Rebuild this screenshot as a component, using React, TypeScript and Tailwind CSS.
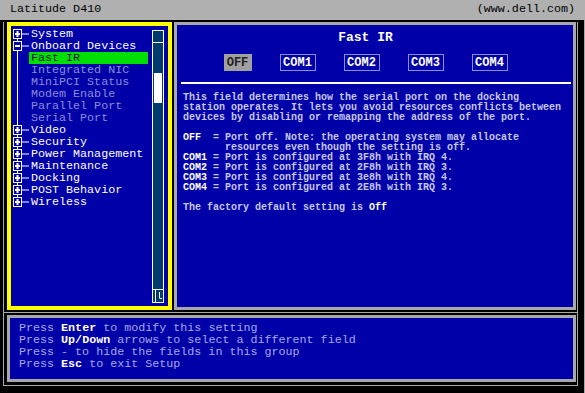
import React from 'react';

type Row = { label: string; kind: 'group' | 'open' | 'item'; selected?: boolean };

const rows: Row[] = [
  { label: 'System', kind: 'group' },
  { label: 'Onboard Devices', kind: 'open' },
  { label: 'Fast IR', kind: 'item', selected: true },
  { label: 'Integrated NIC', kind: 'item' },
  { label: 'MiniPCI Status', kind: 'item' },
  { label: 'Modem Enable', kind: 'item' },
  { label: 'Parallel Port', kind: 'item' },
  { label: 'Serial Port', kind: 'item' },
  { label: 'Video', kind: 'group' },
  { label: 'Security', kind: 'group' },
  { label: 'Power Management', kind: 'group' },
  { label: 'Maintenance', kind: 'group' },
  { label: 'Docking', kind: 'group' },
  { label: 'POST Behavior', kind: 'group' },
  { label: 'Wireless', kind: 'group' },
];

const TreeGlyph = ({ kind, first, last }: { kind: Row['kind']; first: boolean; last: boolean }) => (
  <svg width="18" height="12" viewBox="0 0 18 12" className="shrink-0">
    <line x1="6.5" y1={first ? 6 : 0} x2="6.5" y2={last ? 6 : 12} stroke="#fff" strokeWidth="1" />
    {kind !== 'item' && (
      <>
        <rect x="2.5" y="1.5" width="8" height="9" fill="#0000a8" stroke="#fff" strokeWidth="1" />
        <line x1="4" y1="6" x2="9" y2="6" stroke="#fff" strokeWidth="2" />
        {kind === 'group' && <line x1="6.5" y1="3" x2="6.5" y2="9" stroke="#fff" strokeWidth="2" />}
        <line x1="11" y1="6" x2="18" y2="6" stroke="#fff" strokeWidth="1" />
      </>
    )}
  </svg>
);

const Scrollbar = () => (
  <div className="w-[12px] mt-[4px] mb-[3px] mr-[4px] border border-white bg-[#003c70] flex flex-col">
    <div className="h-[12px] border-b border-white" />
    <div className="flex-1 pt-[30px] px-[1px]">
      <div className="h-[30px] bg-white" />
    </div>
    <div className="h-[13px] border-t border-white flex justify-center">
      <svg width="10" height="12" viewBox="0 0 10 12">
        <line x1="2.5" y1="0" x2="2.5" y2="12" stroke="#fff" />
        <line x1="6.5" y1="2" x2="6.5" y2="8" stroke="#fff" />
        <line x1="6.5" y1="8.5" x2="9" y2="8.5" stroke="#fff" />
      </svg>
    </div>
  </div>
);

const options = ['OFF', 'COM1', 'COM2', 'COM3', 'COM4'];

const K = ({ children }: { children: React.ReactNode }) => <span className="text-white">{children}</span>;

export default function App() {
  return (
    <div className="w-[585px] h-[393px] bg-black flex flex-col font-['Liberation_Mono','DejaVu_Sans_Mono',monospace] overflow-hidden">
      <div className="h-[20px] bg-[#b0b0b0] flex items-center justify-between pl-[10px] pr-[10px] text-[11.7px] text-black shrink-0">
        <span>Latitude D410</span>
        <span>(www.dell.com)</span>
      </div>

      <div className="flex-1 pl-[3px] pr-[2px] pb-[7px] pt-[2px] flex border-r border-[#a8a8a8]">
        <div className="flex-1 mr-[4px] border-l border-r border-b border-[#a8a8a8] pl-[3px] pr-[1px] pb-[3px] flex flex-col">
          <div className="h-[288px] flex gap-[2px]">
            <div className="w-[165px] border-[4px] border-[#ffff00] bg-[#0000a8] flex">
              <div className="flex-1 pt-[2px] text-[11.7px] leading-[12px]">
                {rows.map((r, i) => (
                  <div key={r.label} className="h-[12px] flex items-center">
                    <TreeGlyph kind={r.kind} first={i === 0} last={i === rows.length - 1} />
                    <span
                      className={
                        r.selected
                          ? 'w-[119px] h-[12px] bg-[#00e000] text-[#101040] px-[2px]'
                          : r.kind === 'item'
                          ? 'px-[2px] text-[#8c8cd8]'
                          : 'px-[2px] text-white'
                      }
                    >
                      {r.label}
                    </span>
                  </div>
                ))}
              </div>
              <Scrollbar />
            </div>

            <div className="flex-1 border-[3px] border-[#a8a8a8] bg-[#0000a8] flex flex-col">
              <div className="pr-[19px] flex flex-col items-center">
                <div className="mt-[5px] h-[16px] leading-[16px] text-[13px] font-bold text-white">Fast IR</div>
                <div className="mt-[8px] flex gap-[28px]">
                  {options.map((o) => (
                    <div
                      key={o}
                      className={
                        o === 'OFF'
                          ? 'w-[28px] h-[17px] bg-[#a0a0a0] text-[#202020] text-[12px] font-bold flex items-center justify-center'
                          : 'w-[36px] h-[17px] border border-[#8c8ce0] text-white text-[12px] font-bold flex items-center justify-center'
                      }
                    >
                      {o}
                    </div>
                  ))}
                </div>
              </div>
              <div className="mt-[11px] ml-[4px] mr-[2px] h-[2px] bg-white" />
              <div className="mt-[9px] pl-[6px] text-[10px] leading-[10px] font-bold text-[#c8c8f4] whitespace-pre">
                {'This field determines how the serial port on the docking\n'}
                {'station operates. It lets you avoid resources conflicts between\n'}
                {'devices by disabling or remapping the address of the port.\n'}
                {'\n'}
                <K>OFF</K>{'  = Port off. Note: the operating system may allocate\n'}
                {'       resources even though the setting is off.\n'}
                <K>COM1</K>{' = Port is configured at 3F8h with IRQ 4.\n'}
                <K>COM2</K>{' = Port is configured at 2F8h with IRQ 3.\n'}
                <K>COM3</K>{' = Port is configured at 3e8h with IRQ 4.\n'}
                <K>COM4</K>{' = Port is configured at 2E8h with IRQ 3.\n'}
                {'\n'}
                {'The factory default setting is '}<K>Off</K>
              </div>
            </div>
          </div>

          <div className="mt-[2px] h-px bg-[#a8a8a8] -ml-[3px] -mr-[1px]" />

          <div className="mt-[2px] flex-1 border-[3px] border-[#a8a8a8] bg-[#0000a8] pl-[9px] pt-[4px] text-[11.7px] leading-[12px] text-[#a8a8e8] whitespace-pre">
            <div>Press <span className="font-bold text-white">Enter</span> to modify this setting</div>
            <div>Press <span className="font-bold text-white">Up/Down</span> arrows to select a different field</div>
            <div>Press - to hide the fields in this group</div>
            <div>Press <span className="font-bold text-white">Esc</span> to exit Setup</div>
          </div>
        </div>
      </div>
    </div>
  );
}
